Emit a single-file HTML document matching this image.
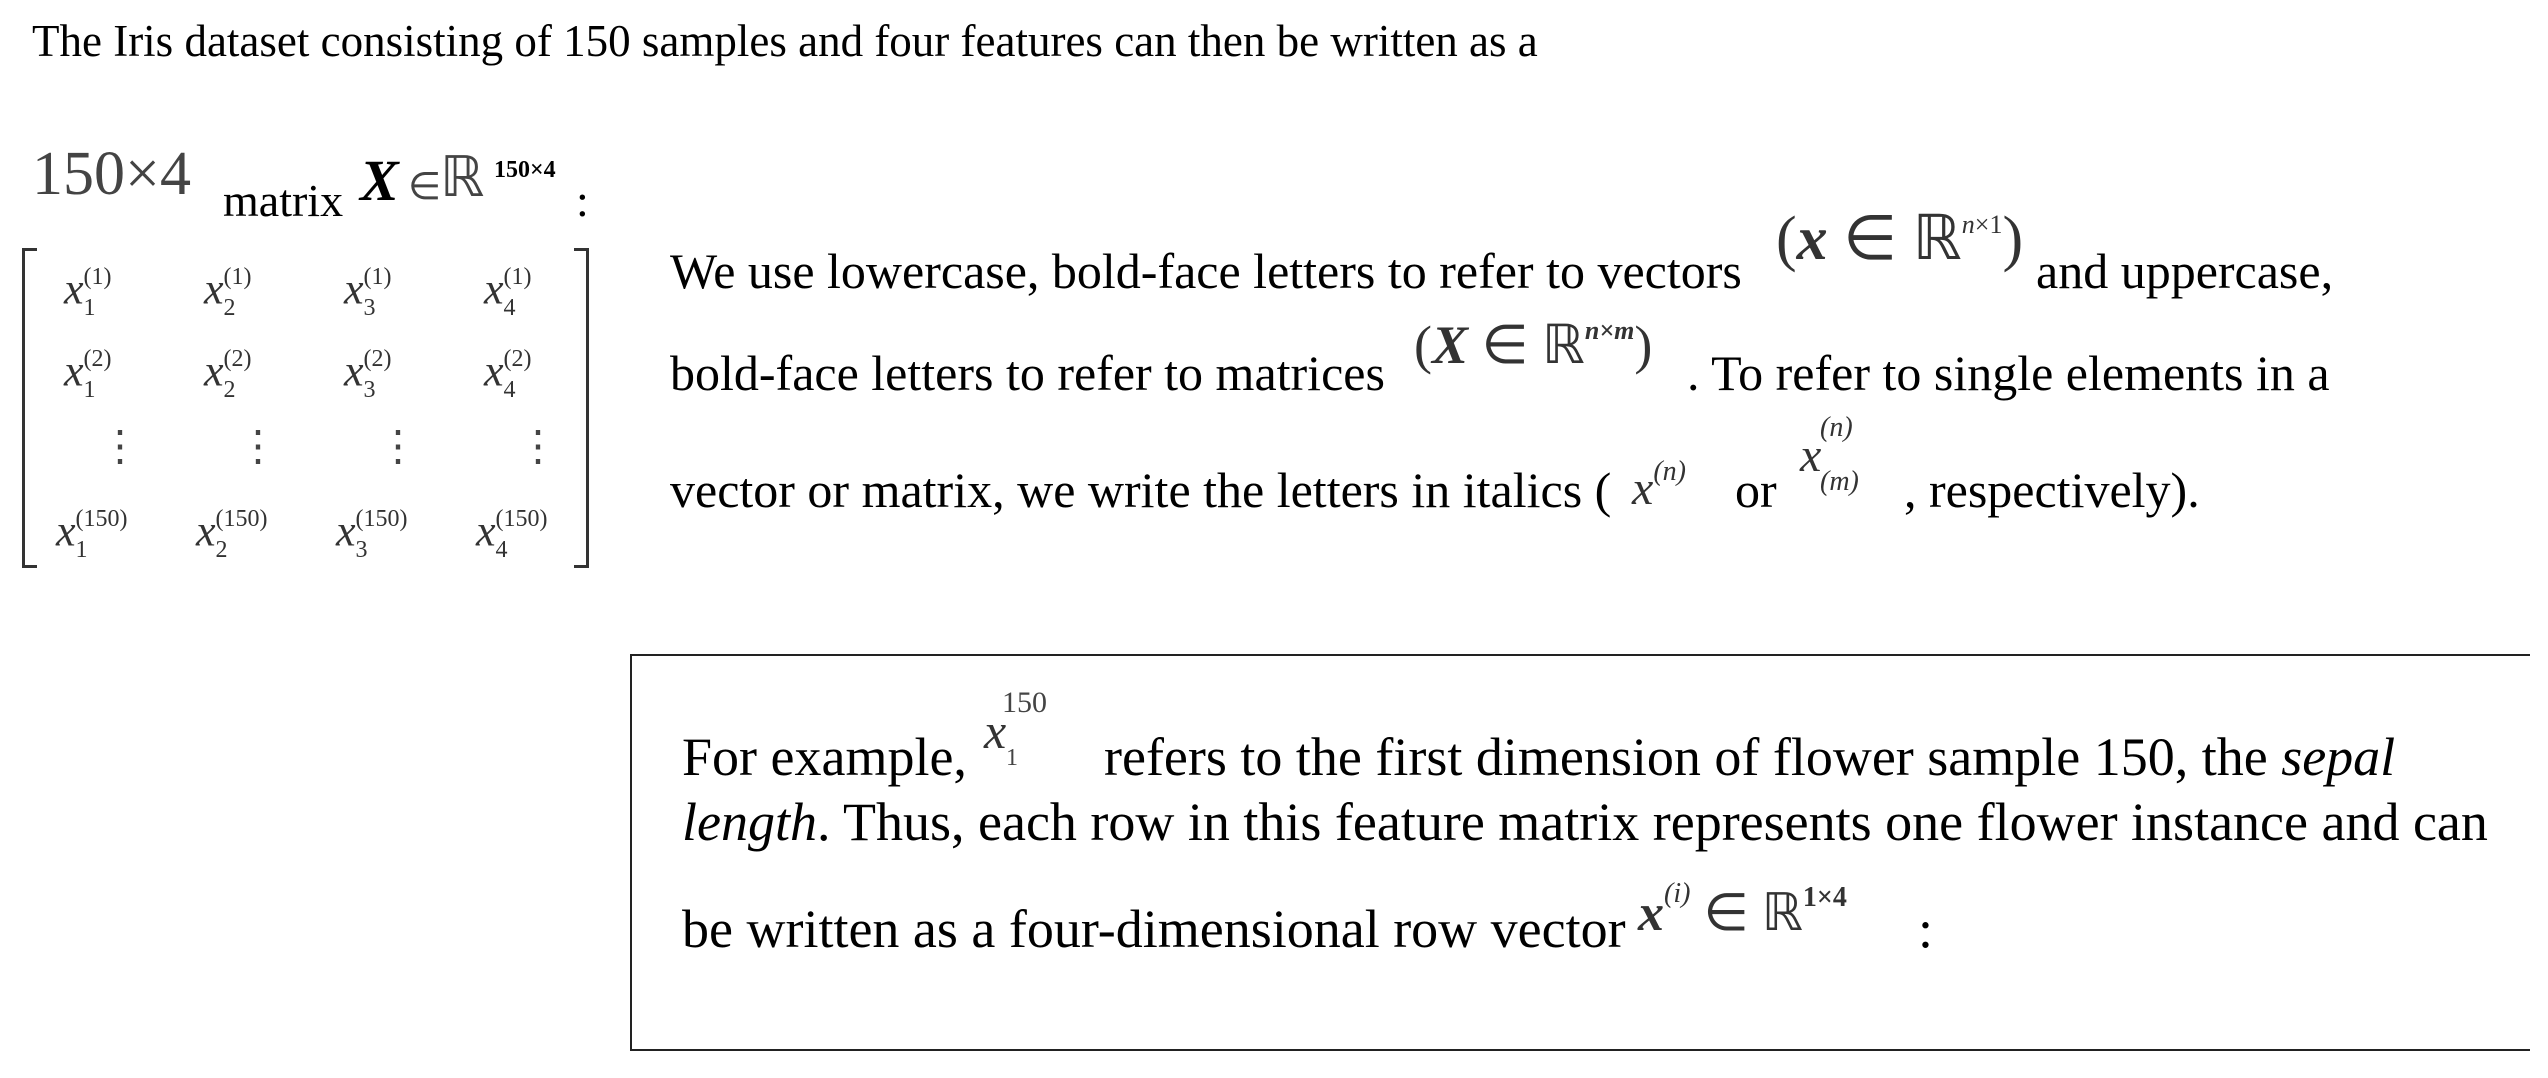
<!DOCTYPE html>
<html><head><meta charset="utf-8"><style>
html,body{margin:0;padding:0;background:#fff;}
body{width:2548px;height:1078px;position:relative;overflow:hidden;font-family:"Liberation Serif",serif;color:#000;}
.a{position:absolute;white-space:nowrap;line-height:1;}
.m{color:#333;font-style:italic;}
.g{color:#444;}
.st{display:inline-block;vertical-align:middle;font-style:normal;line-height:1.3;font-size:24px;}
.st span{display:block;}
</style></head><body>
<div class="a" style="left:32px;top:19px;font-size:45px;">The Iris dataset consisting of 150 samples and four features can then be written as a</div>

<div class="a g" style="left:32px;top:143px;font-size:62px;">150×4</div>
<div class="a" style="left:223px;top:178px;font-size:46px;">matrix</div>
<div class="a" style="left:360px;top:152px;font-size:58px;"><b><i>X</i></b></div>
<div class="a g" style="left:408px;top:168px;font-size:38px;">∈</div>
<div class="a g" style="left:440px;top:150px;font-size:56px;">ℝ</div>
<div class="a" style="left:494px;top:158px;font-size:24px;font-weight:bold;">150×4</div>
<div class="a" style="left:576px;top:178px;font-size:46px;">:</div>

<!-- matrix brackets -->
<div style="position:absolute;left:22px;top:248px;width:12px;height:314px;border:3px solid #333;border-right:none;"></div>
<div style="position:absolute;left:574px;top:248px;width:12px;height:314px;border:3px solid #333;border-left:none;"></div>

<div class="a m" style="left:64px;top:262px;font-size:44px;">x<span class="st"><span>(1)</span><span>1</span></span></div>
<div class="a m" style="left:204px;top:262px;font-size:44px;">x<span class="st"><span>(1)</span><span>2</span></span></div>
<div class="a m" style="left:344px;top:262px;font-size:44px;">x<span class="st"><span>(1)</span><span>3</span></span></div>
<div class="a m" style="left:484px;top:262px;font-size:44px;">x<span class="st"><span>(1)</span><span>4</span></span></div>

<div class="a m" style="left:64px;top:344px;font-size:44px;">x<span class="st"><span>(2)</span><span>1</span></span></div>
<div class="a m" style="left:204px;top:344px;font-size:44px;">x<span class="st"><span>(2)</span><span>2</span></span></div>
<div class="a m" style="left:344px;top:344px;font-size:44px;">x<span class="st"><span>(2)</span><span>3</span></span></div>
<div class="a m" style="left:484px;top:344px;font-size:44px;">x<span class="st"><span>(2)</span><span>4</span></span></div>

<div class="a g" style="left:99px;top:426px;font-size:42px;">⋮</div>
<div class="a g" style="left:237px;top:426px;font-size:42px;">⋮</div>
<div class="a g" style="left:377px;top:426px;font-size:42px;">⋮</div>
<div class="a g" style="left:517px;top:426px;font-size:42px;">⋮</div>

<div class="a m" style="left:56px;top:504px;font-size:44px;">x<span class="st"><span>(150)</span><span>1</span></span></div>
<div class="a m" style="left:196px;top:504px;font-size:44px;">x<span class="st"><span>(150)</span><span>2</span></span></div>
<div class="a m" style="left:336px;top:504px;font-size:44px;">x<span class="st"><span>(150)</span><span>3</span></span></div>
<div class="a m" style="left:476px;top:504px;font-size:44px;">x<span class="st"><span>(150)</span><span>4</span></span></div>

<!-- right paragraph -->
<div class="a" style="left:670px;top:246px;font-size:50px;">We use lowercase, bold-face letters to refer to vectors</div>
<div class="a" style="left:1776px;top:208px;font-size:62px;color:#333;">(<b><i>x</i></b> ∈ ℝ<span style="font-size:26px;vertical-align:26px;font-style:italic">n</span><span style="font-size:26px;vertical-align:26px">×1</span>)</div>
<div class="a" style="left:2036px;top:246px;font-size:50px;">and uppercase,</div>

<div class="a" style="left:670px;top:348px;font-size:50px;">bold-face letters to refer to matrices</div>
<div class="a" style="left:1414px;top:318px;font-size:54px;color:#333;">(<b><i>X</i></b> ∈ ℝ<span style="font-size:26px;vertical-align:24px;font-style:italic;font-weight:bold">n×m</span>)</div>
<div class="a" style="left:1687px;top:348px;font-size:50px;">. To refer to single elements in a</div>

<div class="a" style="left:670px;top:465px;font-size:50px;">vector or matrix, we write the letters in italics (</div>
<div class="a m" style="left:1632px;top:458px;font-size:48px;">x<span style="font-size:28px;vertical-align:24px">(n)</span></div>
<div class="a" style="left:1735px;top:465px;font-size:50px;">or</div>
<div class="a m" style="left:1800px;top:432px;font-size:48px;">x</div>
<div class="a m" style="left:1820px;top:414px;font-size:28px;">(n)</div>
<div class="a m" style="left:1820px;top:468px;font-size:28px;">(m)</div>
<div class="a" style="left:1904px;top:465px;font-size:50px;">, respectively).</div>

<!-- box -->
<div style="position:absolute;left:630px;top:654px;width:1898px;height:393px;border:2px solid #222;border-right:none;"></div>
<div class="a" style="left:682px;top:730px;font-size:54px;">For example,</div>
<div class="a m" style="left:984px;top:706px;font-size:50px;">x</div>
<div class="a g" style="left:1002px;top:688px;font-size:30px;">150</div>
<div class="a g" style="left:1006px;top:746px;font-size:24px;">1</div>
<div class="a" style="left:1104px;top:730px;font-size:54px;">refers to the first dimension of flower sample 150, the <i>sepal</i></div>
<div class="a" style="left:682px;top:795px;font-size:54px;"><i>length</i>. Thus, each row in this feature matrix represents one flower instance and can</div>
<div class="a" style="left:682px;top:902px;font-size:54px;">be written as a four-dimensional row vector</div>
<div class="a" style="left:1638px;top:880px;font-size:52px;color:#333;"><b><i>x</i></b><span style="font-size:28px;vertical-align:28px;font-style:italic">(i)</span> ∈ ℝ<span style="font-size:28px;vertical-align:24px;font-weight:bold">1×4</span></div>
<div class="a" style="left:1918px;top:902px;font-size:54px;">:</div>
</body></html>
